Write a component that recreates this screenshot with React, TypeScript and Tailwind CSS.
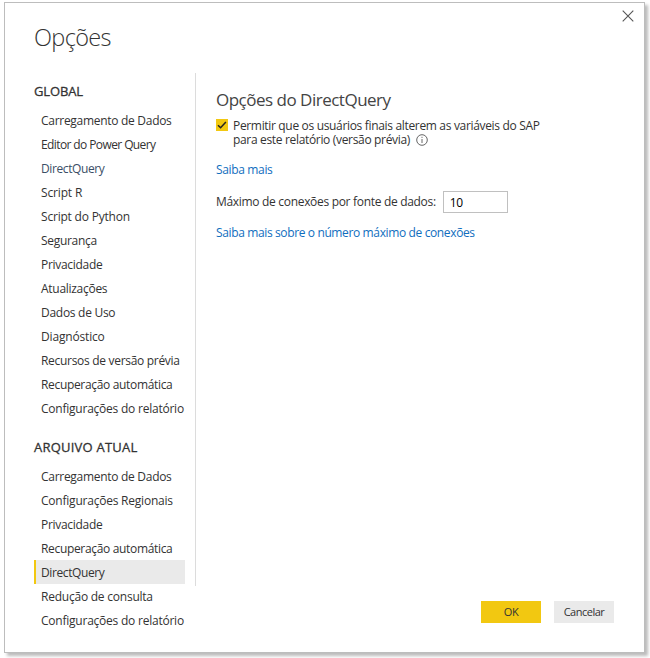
type Item = { label: string; tracking: string; active?: boolean; link?: boolean };

const globalItems: Item[] = [
  { label: 'Carregamento de Dados', tracking: 'tracking-[-0.29px]' },
  { label: 'Editor do Power Query', tracking: 'tracking-[-0.6px]' },
  { label: 'DirectQuery', tracking: 'tracking-[-0.39px]', link: true },
  { label: 'Script R', tracking: 'tracking-[-0.15px]' },
  { label: 'Script do Python', tracking: 'tracking-[-0.2px]' },
  { label: 'Segurança', tracking: 'tracking-[-0.3px]' },
  { label: 'Privacidade', tracking: 'tracking-[-0.3px]' },
  { label: 'Atualizações', tracking: 'tracking-[-0.28px]' },
  { label: 'Dados de Uso', tracking: 'tracking-[-0.28px]' },
  { label: 'Diagnóstico', tracking: 'tracking-[-0.17px]' },
  { label: 'Recursos de versão prévia', tracking: 'tracking-[-0.3px]' },
  { label: 'Recuperação automática', tracking: 'tracking-[-0.33px]' },
  { label: 'Configurações do relatório', tracking: 'tracking-[-0.23px]' },
];

const fileItems: Item[] = [
  { label: 'Carregamento de Dados', tracking: 'tracking-[-0.29px]' },
  { label: 'Configurações Regionais', tracking: 'tracking-[-0.22px]' },
  { label: 'Privacidade', tracking: 'tracking-[-0.3px]' },
  { label: 'Recuperação automática', tracking: 'tracking-[-0.33px]' },
  { label: 'DirectQuery', tracking: 'tracking-[-0.39px]', active: true },
  { label: 'Redução de consulta', tracking: 'tracking-[-0.23px]' },
  { label: 'Configurações do relatório', tracking: 'tracking-[-0.23px]' },
];

function Section({ title, items, tracking }: { title: string; items: Item[]; tracking: string }) {
  return (
    <section>
      <h2
        className={`h-[34px] text-[13px] leading-[34px] font-normal text-[#333] [-webkit-text-stroke:0.3px_#333] ${tracking}`}
      >
        {title}
      </h2>
      <ul>
        {items.map((item) => (
          <li
            key={item.label}
            className={`h-6 w-[151px] border-l-2 pl-[5px] leading-[25px] ${
              item.active ? 'border-[#f2c811] bg-[#eaeaea]' : 'border-transparent'
            } ${item.link ? 'text-[#3a4e66]' : ''} ${item.tracking}`}
          >
            {item.label}
          </li>
        ))}
      </ul>
    </section>
  );
}

export default function App() {
  return (
    <div className="h-[658px] w-[650px] overflow-hidden bg-white pt-[2px] pl-1 font-['Open_Sans','Noto_Sans',sans-serif] text-xs whitespace-nowrap text-[#333]">
      <main className="flex h-[651px] w-[641px] flex-col border border-[#bdbdbd] bg-white shadow-[3px_3px_3px_#bcbcbc]">
        <header className="flex h-[70px] shrink-0 justify-between pl-[29px]">
          <h1 className="pt-[15px] text-[23.5px] leading-[38px] font-light tracking-[-0.65px] text-[#333]">Opções</h1>
          <svg className="mt-[7px] mr-[10px] size-3" viewBox="0 0 12 12" fill="none" stroke="#555" strokeWidth="1.1">
            <path d="M.7.7l10.6 10.6M11.3.7L.7 11.3" />
          </svg>
        </header>
        <div className="flex min-h-0 flex-1">
          <nav className="flex w-[190px] flex-col gap-[10px] pt-[1px] pl-[29px]">
            <Section title="GLOBAL" items={globalItems} tracking="tracking-[-0.15px]" />
            <Section title="ARQUIVO ATUAL" items={fileItems} tracking="tracking-[0.22px]" />
          </nav>
          <div className="h-[513px] w-px bg-[#dcdcdc]" />
          <div className="flex flex-1 flex-col pt-[14px] pl-5">
            <h2 className="text-[17px] leading-[26px] font-normal tracking-[-0.5px] text-[#444]">Opções do DirectQuery</h2>
            <div className="mt-[6px] flex">
              <span className="flex size-3 items-center justify-center bg-[#f2c811]">
                <svg className="size-3" viewBox="0 0 12 12" fill="none" stroke="#222" strokeWidth="1.5">
                  <path d="M2 6.2l2.6 2.5L9.9 3" />
                </svg>
              </span>
              <p className="ml-[5px] leading-[14px] tracking-[-0.33px]">
                Permitir que os usuários finais alterem as variáveis do SAP
                <span className="flex items-center">
                  para este relatório (versão prévia)
                  <svg className="ml-[6px] size-[12px]" viewBox="0 0 12 12" fill="none" stroke="#555" strokeWidth="0.9">
                    <circle cx="6" cy="6" r="5.3" />
                    <path d="M6 5v4M6 2.8v1.1" />
                  </svg>
                </span>
              </p>
            </div>
            <a className="mt-[14px] leading-[18px] tracking-[-0.35px] text-[#106ebe]">Saiba mais</a>
            <label className="mt-3 flex items-center leading-[18px] tracking-[-0.31px]">
              Máximo de conexões por fonte de dados:
              <span className="ml-[7px] h-[22px] w-[65px] border border-[#c0c0c0] pl-[6px] leading-[22px] text-black">10</span>
            </label>
            <a className="mt-[11px] leading-[18px] tracking-[-0.37px] text-[#106ebe]">
              Saiba mais sobre o número máximo de conexões
            </a>
            <footer className="mt-auto mr-[30px] mb-[29px] flex gap-[13px] self-end text-[11px]">
              <button className="h-[22px] w-[60px] bg-[#f2c811] tracking-[-0.3px]">OK</button>
              <button className="h-[22px] w-[60px] bg-[#eaeaea] tracking-[-0.5px]">Cancelar</button>
            </footer>
          </div>
        </div>
      </main>
    </div>
  );
}
